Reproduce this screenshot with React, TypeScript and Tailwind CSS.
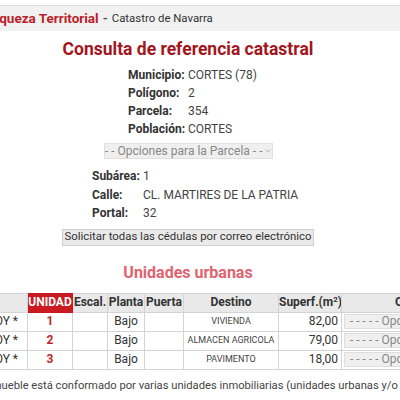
export default function App() {
  const info = [
    ["Municipio:", "CORTES (78)"],
    ["Polígono:", "2"],
    ["Parcela:", "354"],
    ["Población:", "CORTES"],
  ];
  const addr = [
    ["Subárea:", "1"],
    ["Calle:", "CL. MARTIRES DE LA PATRIA"],
    ["Portal:", "32"],
  ];
  const units = [
    { n: "1", destino: "VIVIENDA", sup: "82,00" },
    { n: "2", destino: "ALMACEN AGRICOLA", sup: "79,00" },
    { n: "3", destino: "PAVIMENTO", sup: "18,00" },
  ];
  const cell = "border border-[#d4d4d4] h-[19px] p-0 leading-[17px] whitespace-nowrap overflow-hidden";
  const head = "border border-[#d4d4d4] h-[19px] p-0 leading-[17px] whitespace-nowrap overflow-hidden bg-[#e9e9e9] font-bold text-[12px] text-[#333] text-center";

  return (
    <div className="w-[400px] h-[400px] overflow-hidden bg-white text-[#222]" style={{ fontFamily: "Roboto, 'Noto Sans', sans-serif" }}>
      {/* top bar */}
      <div className="mt-[5px] h-[26px] border-t border-[#dcdcdc] bg-[#f1f1f1] flex items-center whitespace-nowrap">
        <span className="-ml-[13px] text-[13.5px] font-bold text-[#b8232b]">Riqueza Territorial</span>
        <span className="ml-[4px] text-[13px] font-bold text-[#555]">-</span>
        <span className="ml-[4px] text-[11.4px] text-[#333]">Catastro de Navarra</span>
      </div>

      <div className="w-[376px]">
        <h1 className="mt-[7px] text-center text-[17.5px] leading-[22px] font-bold text-[#a3151d]">Consulta de referencia catastral</h1>

        <div className="mt-[6px] ml-[128px] flex flex-col text-[12px]">
          {info.map(([k, v]) => (
            <div key={k} className="flex h-[18px] items-center">
              <span className="w-[60px] font-bold text-[#333]">{k}</span>
              <span className="text-[#444]">{v}</span>
            </div>
          ))}
        </div>

        <div className="mt-[5px] ml-[104px] w-[169px] h-[16px] bg-[#efefef] border border-[#e0e0e0] flex items-center justify-center gap-[3px] text-[12px] text-[#888] whitespace-nowrap">
          <span>- - Opciones para la Parcela - -</span>
          <svg width="9" height="6" viewBox="0 0 9 6" fill="none" stroke="#999" strokeWidth="1">
            <path d="M1 1l3.5 3.5L8 1" />
          </svg>
        </div>

        <div className="mt-[8px] ml-[92px] flex flex-col text-[12px]">
          {addr.map(([k, v]) => (
            <div key={k} className="flex h-[18.5px] items-center">
              <span className="w-[51px] font-bold text-[#333]">{k}</span>
              <span className="text-[#444]">{v}</span>
            </div>
          ))}
        </div>

        <div className="mt-[6px] ml-[62px] w-[252px] h-[17px] bg-[#eaeaea] border border-[#cfcfcf] flex items-center justify-center text-[11.4px] text-[#333] whitespace-nowrap">
          Solicitar todas las cédulas por correo electrónico
        </div>

        <h2 className="mt-[17px] text-center text-[16px] leading-[20px] font-bold text-[#e06470]">Unidades urbanas</h2>
      </div>

      <div className="mt-[10px] -ml-[40px] w-[500px]">
        <table className="table-fixed border-collapse text-[12px] w-[491px]">
          <colgroup>
            <col className="w-[67px]" />
            <col className="w-[45px]" />
            <col className="w-[35px]" />
            <col className="w-[37px]" />
            <col className="w-[39px]" />
            <col className="w-[95px]" />
            <col className="w-[63px]" />
            <col className="w-[110px]" />
          </colgroup>
          <thead>
            <tr>
              <th className={head}></th>
              <th className="border border-[#c8171f] h-[19px] p-0 leading-[17px] whitespace-nowrap bg-[#cc1a22] text-white font-bold text-[12px] text-center">UNIDAD</th>
              <th className={head}>Escal.</th>
              <th className={head}>Planta</th>
              <th className={head}>Puerta</th>
              <th className={head}>Destino</th>
              <th className={head}>Superf.(m<sup className="text-[8px]">2</sup>)</th>
              <th className={head + " text-left pl-[53px]"}>Opciones</th>
            </tr>
          </thead>
          <tbody>
            {units.map((u) => (
              <tr key={u.n}>
                <td className={cell + " text-right pr-[9px] text-[#333]"}>HOY *</td>
                <td className={cell + " text-center font-bold text-[#c0262d]"}>{u.n}</td>
                <td className={cell}></td>
                <td className={cell + " text-center text-[#333]"}>Bajo</td>
                <td className={cell}></td>
                <td className={cell + " text-center text-[9px] text-[#444]"}>{u.destino}</td>
                <td className={cell + " text-right pr-[3px] text-[#333]"}>{u.sup}</td>
                <td className={cell + " pl-[2px]"}>
                  <div className="h-[15px] w-[100px] bg-[#efefef] border border-[#dedede] text-[12px] leading-[13px] text-[#888] pl-[5px] whitespace-nowrap">- - - - - Opciones</div>
                </td>
              </tr>
            ))}
          </tbody>
        </table>
      </div>

      <p className="mt-[8px] -ml-[29px] text-[11.2px] text-[#444] whitespace-nowrap">
        El inmueble está conformado por varias unidades inmobiliarias (unidades urbanas y/o subparcelas)
      </p>
    </div>
  );
}
